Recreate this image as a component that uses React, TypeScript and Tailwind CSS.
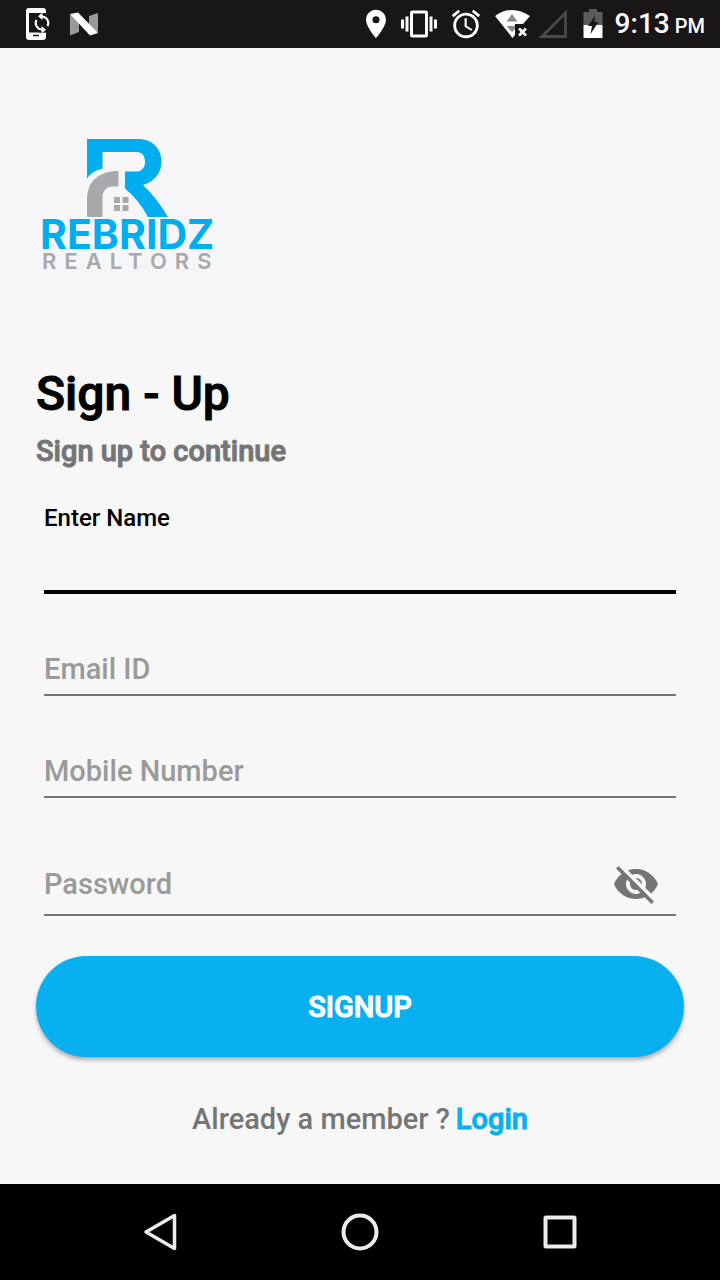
import { useState } from "react";
import {
  MdAlarm,
  MdLocationOn,
  MdVibration,
  MdVisibility,
  MdVisibilityOff,
} from "react-icons/md";

interface FieldProps {
  id: string;
  label: string;
  type: string;
  value: string;
  onChange: (value: string) => void;
}

function Logo() {
  return (
    <svg
      viewBox="0 0 192 192"
      className="w-48 h-48"
      role="img"
      aria-label="Rebridz Realtors"
    >
      <path d="M0 52H186V136Q186 190 150 190H0Z" fill="#f6f6f8" />
      <path
        d="M51 23H102C117 23 125.500 33 125.500 46C125.500 57 118 66 107 69Q120 81 132 101H112Q103 84 89 72.500V55.500H101C106 55.500 109 51 109 46C109 40 106 36 101 36H66.500V52.500C60 54 55 57 51 62.500Z"
        fill="#00aeef"
      />
      <path
        d="M51 101V84C51 65 63 55 82.500 55V70.500H77C70 70.500 66.500 75 66.500 82V101Z"
        fill="#a7a9ac"
      />
      <path
        d="M78 81h6v6h-6zM86.500 81h6v6h-6zM78 89h6v6h-6zM86.500 89h6v6h-6z"
        fill="#a7a9ac"
      />
      <text
        x="4"
        y="133"
        className="font-['Inter',sans-serif] text-[41px] font-bold"
        fill="#00aeef"
      >
        REBRIDZ
      </text>
      <text
        x="6"
        y="153"
        className="font-['Inter',sans-serif] text-[22px] font-semibold tracking-[8px]"
        fill="#a7a9ac"
      >
        REALTORS
      </text>
    </svg>
  );
}

function StatusBar() {
  return (
    <header className="flex items-center h-12 pl-6 pr-[15px] bg-[#181617] text-white">
      <div className="flex items-center gap-5">
        <svg viewBox="0 0 26 32" className="w-[26px] h-8" fill="none">
          <path
            d="M5 0H19Q22 0 22 3V5H5V24.500H22V29Q22 32 19 32H5Q2 32 2 29V3Q2 0 5 0Z"
            fill="white"
          />
          <circle cx="18" cy="15" r="10" fill="#181617" />
          <path d="M9 27.500h6" stroke="#181617" strokeWidth="1.500" />
          <path
            d="M17.500 8.500A6.500 6.500 0 0 1 23.500 18M18.500 21.500A6.500 6.500 0 0 1 12.500 12"
            stroke="white"
            strokeWidth="2.200"
          />
          <path d="M18.500 4.500V12L14 8.300zM17.500 18V25.500L22 21.700z" fill="white" />
        </svg>
        <svg viewBox="0 0 28 24" className="w-7 h-6">
          <path d="M0 2L9 9V20L0 23.500zM28 1V21L19 15V4z" fill="#9b9a9b" />
          <path d="M0 2L8 0.500L28 21L20 23.500z" fill="white" />
        </svg>
      </div>
      <div className="flex items-center gap-2 ml-auto">
        <MdLocationOn className="w-[34px] h-[34px]" />
        <MdVibration className="w-9 h-9" />
        <MdAlarm className="w-[34px] h-[34px] ml-1" />
        <svg viewBox="0 0 36 30" className="w-9 h-[30px] ml-1">
          <path d="M0 7Q17 -5 35 7L28 15H20V26L17.500 29z" fill="white" />
          <path d="M17 5L22.500 12.500H11.500zM11.500 17H20V20L17 23z" fill="#8b8a8b" />
          <path
            d="M24 19.500l7 7M31 19.500l-7 7"
            stroke="white"
            strokeWidth="2.500"
          />
        </svg>
        <svg viewBox="0 0 28 30" className="w-7 h-[30px]">
          <path
            d="M26.500 4V27.500H3z"
            fill="none"
            stroke="#4b494a"
            strokeWidth="2.800"
          />
        </svg>
        <svg viewBox="0 0 20 30" className="w-5 h-[30px] ml-2">
          <path d="M6 0H14V3H19.500V16H0.500V3H6z" fill="#5c5a5b" />
          <path d="M0.500 16H19.500V29H0.500z" fill="white" />
          <path d="M12 7L11.500 13H15.500L7.500 25L9 17H5z" fill="#181617" />
        </svg>
        <p className="flex items-baseline gap-[5px] pt-0.5 ml-1 text-[28px] leading-8 font-medium">
          9:13 <span className="text-xl leading-8">PM</span>
        </p>
      </div>
    </header>
  );
}

function Field({ id, label, type, value, onChange }: FieldProps) {
  return (
    <input
      id={id}
      type={type}
      aria-label={label}
      placeholder={label}
      value={value}
      onChange={(e) => onChange(e.target.value)}
      className="block w-full mt-14 pb-1.5 border-b-2 border-[#757575] bg-transparent text-[29px] leading-[38px] font-medium text-black placeholder:text-[#9a9a9a] focus:outline-none"
    />
  );
}

function NavBar() {
  return (
    <nav className="grid grid-cols-3 items-center h-24 px-[60px] bg-black">
      <button aria-label="Back" className="flex justify-center">
        <svg viewBox="0 0 40 40" className="w-10 h-10">
          <path
            d="M34.500 3.500V36.500L6 20z"
            fill="none"
            stroke="#ececec"
            strokeWidth="3.500"
            strokeLinejoin="round"
          />
        </svg>
      </button>
      <button aria-label="Home" className="flex justify-center">
        <svg viewBox="0 0 40 40" className="w-10 h-10">
          <circle
            cx="20"
            cy="20"
            r="16.500"
            fill="none"
            stroke="#ececec"
            strokeWidth="4"
          />
        </svg>
      </button>
      <button aria-label="Recent apps" className="flex justify-center">
        <svg viewBox="0 0 40 40" className="w-10 h-10">
          <rect
            x="5.500"
            y="5.500"
            width="29"
            height="29"
            rx="0.500"
            fill="none"
            stroke="#ececec"
            strokeWidth="4"
            strokeLinejoin="round"
          />
        </svg>
      </button>
    </nav>
  );
}

export default function App() {
  const [name, setName] = useState("");
  const [email, setEmail] = useState("");
  const [mobile, setMobile] = useState("");
  const [password, setPassword] = useState("");
  const [showPassword, setShowPassword] = useState(false);

  return (
    <div className="flex flex-col min-h-screen bg-[#f7f7f7] font-['Roboto',sans-serif]">
      <StatusBar />

      <main className="flex-1 px-9 pt-[68px] pb-10">
        <Logo />
        <h1 className="mt-14 text-5xl leading-[60px] font-medium text-black [-webkit-text-stroke:1px_currentColor]">
          Sign - Up
        </h1>
        <p className="mt-2 text-[29px] leading-[38px] font-medium text-[#757575] [-webkit-text-stroke:1px_currentColor]">
          Sign up to continue
        </p>

        <form onSubmit={(e) => e.preventDefault()}>
          <div className="px-2 pt-8">
            <label
              htmlFor="name"
              className="block text-2xl leading-8 font-medium text-black"
            >
              Enter Name
            </label>
            <input
              id="name"
              type="text"
              value={name}
              onChange={(e) => setName(e.target.value)}
              className="block w-full h-[60px] border-b-4 border-black bg-transparent text-[29px] font-medium focus:outline-none"
            />
            <Field
              id="email"
              label="Email ID"
              type="email"
              value={email}
              onChange={setEmail}
            />
            <Field
              id="mobile"
              label="Mobile Number"
              type="tel"
              value={mobile}
              onChange={setMobile}
            />
            <div className="flex items-center mt-14 h-[62px] border-b-2 border-[#757575]">
              <input
                id="password"
                type={showPassword ? "text" : "password"}
                aria-label="Password"
                placeholder="Password"
                value={password}
                onChange={(e) => setPassword(e.target.value)}
                className="flex-1 min-w-0 bg-transparent text-[29px] leading-9 font-medium text-black placeholder:text-[#9a9a9a] focus:outline-none"
              />
              <button
                type="button"
                aria-label="Toggle password visibility"
                onClick={() => setShowPassword(!showPassword)}
                className="mr-4 text-[#757575]"
              >
                {showPassword ? (
                  <MdVisibility className="w-12 h-12" />
                ) : (
                  <MdVisibilityOff className="w-12 h-12" />
                )}
              </button>
            </div>
          </div>

          <button
            type="submit"
            className="w-full h-[101px] mt-10 pt-0.5 rounded-full bg-[#08b0f0] text-[29px] font-medium text-white [-webkit-text-stroke:1px_currentColor] shadow-[0_3px_4px_rgba(0,0,0,0.3)]"
          >
            SIGNUP
          </button>
        </form>

        <p className="flex justify-center gap-[6px] mt-11 text-[29px] leading-9 font-medium text-[#757575]">
          Already a member ?
          <a
            href="#login"
            className="text-[#08b0f0] [-webkit-text-stroke:1px_currentColor]"
          >
            Login
          </a>
        </p>
      </main>

      <NavBar />
    </div>
  );
}
